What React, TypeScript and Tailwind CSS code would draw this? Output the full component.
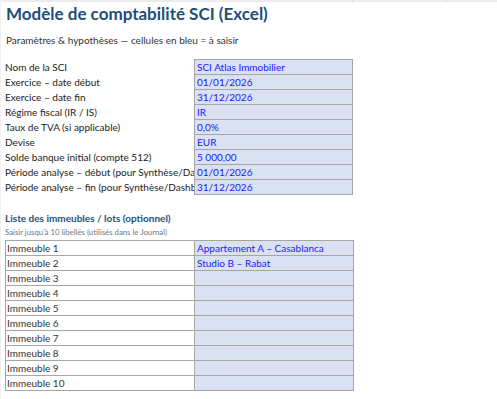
import React from 'react';

const params: [string, string][] = [
    ['Nom de la SCI', 'SCI Atlas Immobilier'],
    ['Exercice – date début', '01/01/2026'],
    ['Exercice – date fin', '31/12/2026'],
    ['Régime fiscal (IR / IS)', 'IR'],
    ['Taux de TVA (si applicable)', '0,0%'],
    ['Devise', 'EUR'],
    ['Solde banque initial (compte 512)', '5 000,00'],
    ['Période analyse – début (pour Synthèse/Dashboard)', '01/01/2026'],
    ['Période analyse – fin (pour Synthèse/Dashboard)', '31/12/2026'],
];

const lots = [
    'Appartement A – Casablanca',
    'Studio B – Rabat',
    '', '', '', '', '', '', '', '',
];

export default function App() {
    return (
        <div className="relative w-[497px] h-[399px] bg-white overflow-hidden text-[#222] font-['Lato','Liberation_Sans',sans-serif]">
            {/* faint sheet gridlines */}
            <div className="absolute top-0 left-0 right-0 h-[2px] bg-[#ececec]" />
            <div className="absolute top-0 left-0 bottom-0 w-px bg-[#f0f0f0]" />
            <div className="absolute top-0 left-[352px] h-[2px] w-px bg-[#dcdcdc]" />
            <div className="absolute top-0 left-[446px] h-[2px] w-px bg-[#dcdcdc]" />

            <div className="pl-[6px] pt-[4px]">
                <h1 className="text-[17px] leading-[20px] font-bold text-[#1f4e79]">Modèle de comptabilité SCI (Excel)</h1>
                <p className="mt-[10px] text-[10px] leading-[12px] text-[#333]">Paramètres &amp; hypothèses — cellules en bleu = à saisir</p>
            </div>

            <div className="mt-[14px] ml-[5px] w-[348px]">
                {params.map(([label, value], i) => (
                    <div key={label} className="flex h-[15px] text-[10px] leading-[14px]">
                        {/* long labels are clipped by the next cell, as in the sheet */}
                        <div className="w-[189px] shrink-0 whitespace-nowrap overflow-hidden text-[#222]">{label}</div>
                        <div
                            className={
                                'w-[159px] shrink-0 bg-[#d9e1f2] border-x border-b border-[#a6a6a6] pl-[2px] text-[#1a1aff] ' +
                                (i === 0 ? 'border-t h-[16px] -mt-px' : '')
                            }
                        >
                            {value}
                        </div>
                    </div>
                ))}
            </div>

            <div className="mt-[17px] ml-[5px]">
                <h2 className="text-[10px] leading-[12px] font-bold text-[#1f4e79]">Liste des immeubles / lots (optionnel)</h2>
                <p className="mt-[4px] text-[7.8px] leading-[9px] text-[#777]">Saisir jusqu'à 10 libellés (utilisés dans le Journal)</p>
            </div>

            <div className="mt-[3px] ml-[5px] w-[349px] border-t border-[#a6a6a6]">
                {lots.map((lot, i) => (
                    <div key={i} className="flex h-[15px] text-[10px] leading-[14px]">
                        <div className="w-[190px] bg-white border-x border-b border-[#a6a6a6] pl-[1px] text-[#333]">Immeuble {i + 1}</div>
                        <div className="w-[159px] bg-[#d9e1f2] border-r border-b border-[#a6a6a6] pl-[2px] text-[#1a1aff]">{lot}</div>
                    </div>
                ))}
            </div>
        </div>
    );
}
